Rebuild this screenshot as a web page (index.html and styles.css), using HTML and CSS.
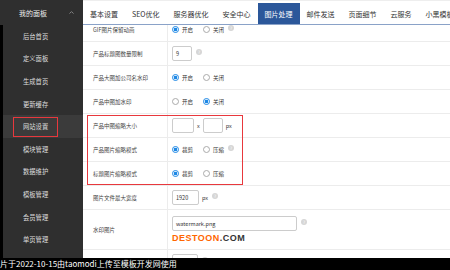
FILE: index.html
```html
<!DOCTYPE html>
<html lang="zh-CN"><head>
  <meta charset="UTF-8"/>
  <meta name="viewport" content="width=device-width,initial-scale=1"/>
  <title>网站设置</title>
  <link rel="stylesheet" href="styles.css">
</head><body>
  <div class="page">
    <aside class="side">
      <div class="side-head">
        <span>我的面板</span>
        <svg class="caret" width="5" height="3" viewBox="0 0 5 3"><path d="M0.5 2.6 L2.5 0.6 L4.5 2.6" fill="none" stroke="#999" stroke-width="0.8"/></svg>
      </div>
      <ul class="side-nav">
        <li><span>后台首页</span></li>
        <li><span>定义面板</span></li>
        <li><span>生成首页</span></li>
        <li><span>更新缓存</span></li>
        <li class="on"><span>网站设置</span></li>
        <li><span>模块管理</span></li>
        <li><span>数据维护</span></li>
        <li><span>模板管理</span></li>
        <li><span>会员管理</span></li>
        <li><span>单页管理</span></li>
      </ul>
    </aside>

    <main class="main">
      <nav class="tabs">
        <a class="tab">基本设置</a>
        <a class="tab">SEO优化</a>
        <a class="tab">服务器优化</a>
        <a class="tab">安全中心</a>
        <a class="tab on">图片处理</a>
        <a class="tab">邮件发送</a>
        <a class="tab">页面细节</a>
        <a class="tab">云服务</a>
        <a class="tab">小黑模板</a>
      </nav>

      <div class="form-wrap">
        <div class="form">
          <div class="row">
            <div class="lbl">GIF图片保留动画</div>
            <div class="val">
              <label class="radio on"><i></i>开启</label>
              <label class="radio"><i></i>关闭</label>
              <span class="help">?</span>
            </div>
          </div>
          <div class="row">
            <div class="lbl">产品标题图数量限制</div>
            <div class="val">
              <span class="ipt w20">9</span>
              <span class="help">?</span>
            </div>
          </div>
          <div class="row">
            <div class="lbl">产品大图加公司名水印</div>
            <div class="val">
              <label class="radio on"><i></i>开启</label>
              <label class="radio"><i></i>关闭</label>
            </div>
          </div>
          <div class="row">
            <div class="lbl">产品中图加水印</div>
            <div class="val">
              <label class="radio"><i></i>开启</label>
              <label class="radio on"><i></i>关闭</label>
            </div>
          </div>

          <div class="group">
            <div class="row">
              <div class="lbl">产品中图缩略大小</div>
              <div class="val">
                <span class="ipt w21"></span>
                <span class="times">x</span>
                <span class="ipt w20"></span>
                <span class="unit">px</span>
              </div>
            </div>
            <div class="row">
              <div class="lbl">产品图片缩略模式</div>
              <div class="val">
                <label class="radio on"><i></i>裁剪</label>
                <label class="radio"><i></i>压缩</label>
                <span class="help">?</span>
              </div>
            </div>
            <div class="row">
              <div class="lbl">标题图片缩略模式</div>
              <div class="val">
                <label class="radio on"><i></i>裁剪</label>
                <label class="radio"><i></i>压缩</label>
              </div>
            </div>
          </div>

          <div class="row">
            <div class="lbl">图片文件最大宽度</div>
            <div class="val">
              <span class="ipt w27">1920</span>
              <span class="unit">px</span>
              <span class="help">?</span>
            </div>
          </div>
          <div class="row tall">
            <div class="lbl">水印图片</div>
            <div class="val stack">
              <div class="line">
                <span class="ipt w125">watermark.png</span>
                <span class="help">?</span>
              </div>
              <div class="logo">DESTOON<b>.COM</b></div>
            </div>
          </div>
          <div class="row">
            <div class="lbl"></div>
            <div class="val top">
              <span class="ipt w26"></span>
              <span class="help">?</span>
            </div>
          </div>
        </div>
      </div>
    </main>
  </div>

  <div class="caption">片于2022-10-15由taomodi上传至模板开发网使用</div>
</body></html>
```

FILE: styles.css
```css
body {margin:0;width:450px;height:270px;overflow:hidden;position:relative;background:#fff;
      font-family:"Noto Sans CJK SC","Noto Sans",sans-serif;color:#333}
.page {display:flex;height:270px}

/* sidebar */
.side {width:83px;flex:none;background:#2f2f2f;color:#ddd;display:flex;flex-direction:column}
.side-head {height:25px;flex:none;display:flex;align-items:center;justify-content:space-between;
            padding:0 9px 0 19px;font-size:7px;color:#eee}
.side-nav {list-style:none;margin:0;padding:0;flex:1;border-left:3px solid #000}
.side-nav li {height:22.6px;display:flex;align-items:center;padding-left:10px;font-size:6.3px}
.side-nav li span {height:20px;display:flex;align-items:center;padding:0 9px;
                   border:1.5px solid transparent;box-sizing:border-box}
.side-nav li.on {background:#3b3b3b}
.side-nav li.on span {border-color:#e8383d}

/* main */
.main {flex:1;min-width:0;display:flex;flex-direction:column;overflow:hidden}
.tabs {height:25px;flex:none;box-sizing:border-box;display:flex;align-items:flex-end;
       padding-top:3px;border-top:1px solid #eee;border-bottom:1px solid #8aa2c8;
       white-space:nowrap;position:relative;z-index:1;background:#fff}
.tab {flex:none;height:21px;display:flex;align-items:center;padding:0 7px;font-size:7px;color:#333}
.tab.on {background:#2b579a;color:#fff}

.form-wrap {flex:1;overflow:hidden}
.form {margin-top:-7px}
.row {display:flex;height:24px;box-sizing:border-box;border-bottom:1px solid #ececec}
.row.tall {height:40px}
.lbl {width:85px;flex:none;box-sizing:border-box;border-right:1px solid #ececec;
      padding-left:10px;display:flex;align-items:center;font-size:5.5px;color:#444;white-space:nowrap}
.val {flex:1;display:flex;align-items:center;padding-left:4px;font-size:5.5px;color:#333}
.val.stack {flex-direction:column;align-items:flex-start;justify-content:center}
.val.top {align-items:flex-start;padding-top:4px}
.line {display:flex;align-items:center}

.radio {display:inline-flex;align-items:center}
.radio + .radio {margin-left:10px}
.radio i {width:7px;height:7px;box-sizing:border-box;border:1px solid #aaa;border-radius:50%;
          margin-right:3px;background:#fff}
.radio.on i {border-color:#1e88e5;background:radial-gradient(circle,#1e88e5 0 1.6px,#fff 2.1px)}

.help {width:6px;height:6px;border-radius:50%;background:#d6d6d6;color:#fff;font-size:4.5px;
       display:inline-flex;align-items:center;justify-content:center;margin-left:4px;margin-top:-3px}
.val.top .help {margin-top:3px}

.ipt {height:15px;box-sizing:border-box;border:1px solid #ccc;border-radius:2px;padding:0 3px;
      display:inline-flex;align-items:center;font-size:5.5px;color:#333;background:#fff}
.w20 {width:20px}
.w21 {width:22px}
.w26 {width:26px}
.w27 {width:27px}
.w125 {width:125px}
.times {margin:0 3px}
.unit {margin-left:3px}

.logo {margin-top:2px;font-family:"Liberation Sans",Arial,sans-serif;font-weight:bold;
       font-size:9px;line-height:10px;letter-spacing:0.5px;color:#f60}
.logo b {color:#333}

/* red annotation box */
.group {position:relative}
.group::after {content:"";position:absolute;left:4px;top:1px;bottom:1px;width:156px;
               border:1.5px solid #e8383d;box-sizing:border-box;pointer-events:none}

.caption {position:absolute;left:0;bottom:0;width:100%;height:12px;background:#000;color:#fff;
          font-size:8px;line-height:12px;white-space:nowrap;overflow:hidden}
```
